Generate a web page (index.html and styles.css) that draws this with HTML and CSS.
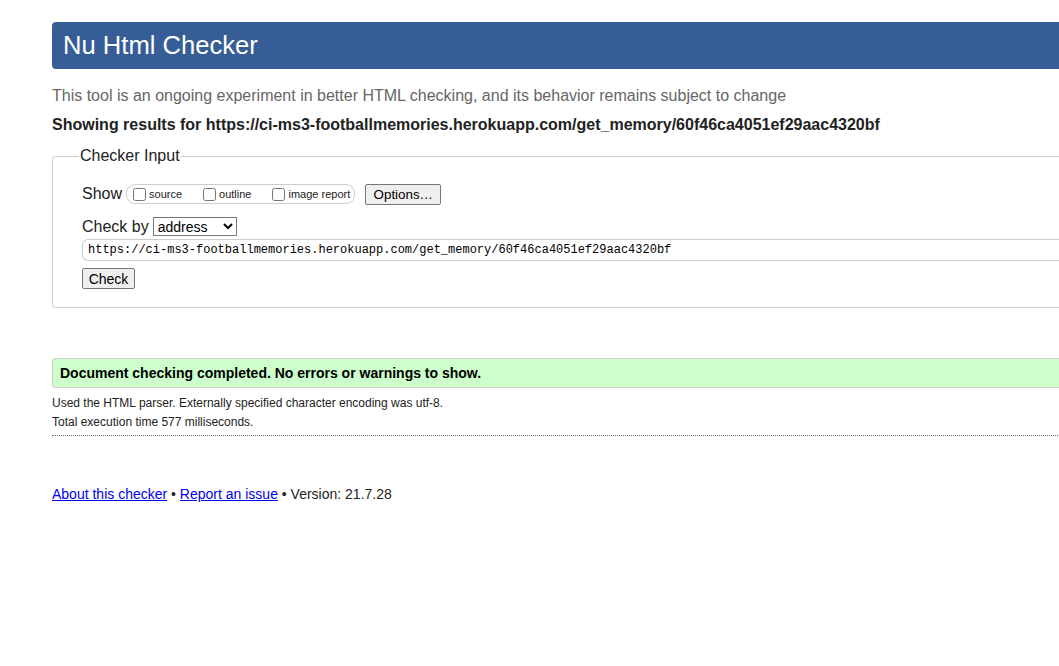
FILE: index.html
```html
<!DOCTYPE html>
<html>
<head>
<meta charset="utf-8">
<title>Nu Html Checker</title>
<link rel="stylesheet" href="styles.css">
</head>
<body>
<div class="page">
  <h1 class="banner">Nu Html Checker</h1>
  <p class="tagline">This tool is an ongoing experiment in better HTML checking, and its behavior remains subject to change</p>
  <p class="results-for">Showing results for https://ci-ms3-footballmemories.herokuapp.com/get_memory/60f46ca4051ef29aac4320bf</p>
  <fieldset class="checker">
    <legend class="checker-legend">Checker Input</legend>
    <div class="row show-row">
      <span class="row-label">Show</span>
      <span class="show-box">
        <label class="opt"><input type="checkbox"> source</label>
        <label class="opt"><input type="checkbox"> outline</label>
        <label class="opt"><input type="checkbox">image report</label>
      </span>
      <button class="btn options-btn">Options…</button>
    </div>
    <div class="row checkby-row">
      <span class="row-label">Check by</span>
      <select class="sel"><option>address</option></select>
    </div>
    <div class="url-box">https://ci-ms3-footballmemories.herokuapp.com/get_memory/60f46ca4051ef29aac4320bf</div>
    <div class="row"><button class="btn check-btn">Check</button></div>
  </fieldset>
  <p class="success">Document checking completed. No errors or warnings to show.</p>
  <div class="details">
    <p class="detail">Used the HTML parser. Externally specified character encoding was utf-8.</p>
    <p class="detail">Total execution time 577 milliseconds.</p>
  </div>
  <hr class="dotted">
  <p class="footer"><a href="#">About this checker</a> • <a href="#">Report an issue</a> • Version: 21.7.28</p>
</div>
</body>
</html>
```
FILE: styles.css
```css
html { overflow: hidden; }
body {
  margin: 0;
  background: #fff;
  font-family: "Liberation Sans", Arial, sans-serif;
  color: #222;
}
.page {
  width: 1040px;
  padding: 22px 0 0 52px;
}
.banner {
  margin: 0;
  height: 47px;
  line-height: 47px;
  padding-left: 11px;
  background: #365d95;
  color: #fff;
  font-weight: normal;
  font-size: 25.6px;
  border-radius: 4px 0 0 4px;
}
.tagline {
  margin: 17px 0 0;
  font-size: 16px;
  line-height: 20px;
  color: #666;
}
.results-for {
  margin: 9px 0 0;
  font-size: 16px;
  line-height: 20px;
  font-weight: bold;
  color: #222;
}
.checker {
  margin: 12px 0 0;
  border: 1px solid #ccc;
  border-right: none;
  border-radius: 4px 0 0 4px;
  padding: 17px 0 18px 29px;
}
.checker-legend {
  font-size: 16px;
  padding: 0 1px;
  margin-left: -3px;
  color: #222;
}
.row {
  display: flex;
  align-items: center;
}
.row-label {
  font-size: 16px;
  margin-right: 4px;
}
.show-row { height: 24px; }
.show-box {
  display: inline-flex;
  align-items: center;
  height: 18px;
  border: 1px solid #ccc;
  border-radius: 9px;
  padding: 0 4px 0 3px;
  margin-right: 10px;
}
.opt {
  font-size: 11px;
  display: inline-flex;
  align-items: center;
  margin-right: 18px;
}
.opt:last-child { margin-right: 0; }
.opt input {
  margin: 0 3px 0 3px;
  width: 13px;
  height: 13px;
}
.btn {
  font-family: "Liberation Sans", Arial, sans-serif;
  font-size: 13.33px;
  background: #efefef;
  border: 1px solid #767676;
  border-radius: 2px;
  color: #000;
  padding: 1px 7px;
  height: 21px;
}
.options-btn { width: 76px; }
.checkby-row { margin-top: 11px; }
.sel {
  font-family: "Liberation Sans", Arial, sans-serif;
  font-size: 14px;
  width: 84px;
  height: 19px;
  padding: 0;
  border: 1px solid #767676;
  border-radius: 0;
  background: #fff;
  color: #000;
}
.url-box {
  margin-top: 3px;
  height: 20px;
  line-height: 21px;
  border: 1px solid #ccc;
  border-right: none;
  border-radius: 6px 0 0 6px;
  padding-left: 5px;
  font-family: "Liberation Mono", "DejaVu Sans Mono", monospace;
  font-size: 12px;
  color: #000;
}
.check-btn { margin-top: 7px; width: 53px; padding: 0; font-size: 14px; }
.success {
  margin: 50px 0 0;
  background: #ccffcc;
  border: 1px solid #ccc;
  border-right: none;
  border-radius: 4px 0 0 4px;
  height: 28px;
  line-height: 28px;
  padding-left: 7px;
  font-size: 14px;
  font-weight: bold;
  color: #000;
}
.details { margin-top: 6px; }
.detail {
  margin: 0;
  font-size: 12px;
  line-height: 19px;
  color: #222;
}
.dotted {
  margin: 3px 0 0;
  border: none;
  border-top: 1px dotted #666;
  height: 0;
}
.footer {
  margin: 50px 0 0;
  font-size: 14px;
  color: #222;
}
.footer a { color: #0000ee; }
```
